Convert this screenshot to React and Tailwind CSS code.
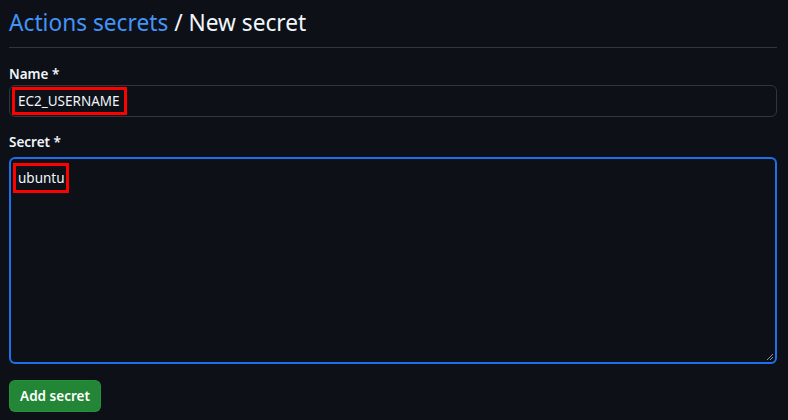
export default function App() {
  const font = { fontFamily: '"Noto Sans", "Open Sans", sans-serif' };
  return (
    <div
      className="w-[788px] h-[420px] overflow-hidden bg-[#0d1117] pl-[9px] pr-[11px] text-[#e6edf3]"
      style={font}
    >
      <h1 className="pt-[5px] pb-[6px] text-[22.7px] leading-[36px] font-normal border-b border-[#30363d] whitespace-nowrap">
        <span className="text-[#4493f8]">Actions secrets</span>
        <span className="text-[#f0f6fc]"> / New secret</span>
      </h1>

      <div className="mt-[16px] mb-[1px] text-[13.5px] leading-[20px] font-semibold text-[#f0f6fc]">Name *</div>
      <div className="h-[32px] rounded-[6px] border border-[#30363d] flex items-center pl-[2px]">
        <div className="h-[28px] w-[115px] border-[3px] border-[#ff0000] flex items-center pl-[3px] text-[13.5px] text-[#f0f6fc] whitespace-nowrap">
          EC2_USERNAME
        </div>
      </div>

      <div className="mt-[15px] mb-[5px] text-[13.5px] leading-[20px] font-semibold text-[#f0f6fc]">Secret *</div>
      <div className="relative h-[207px] rounded-[6px] border-2 border-[#1f6feb] pl-[2px] pt-[4px]">
        <div className="h-[30px] w-[56px] border-[3px] border-[#ff0000] flex items-center pl-[2px] text-[13.5px] text-[#f0f6fc] whitespace-nowrap">
          ubuntu
        </div>
        <svg className="absolute right-[1px] bottom-[1px]" width="9" height="9" viewBox="0 0 9 9">
          <line x1="8" y1="2" x2="2" y2="8" stroke="#8b949e" strokeWidth="1" />
          <line x1="8" y1="5" x2="5" y2="8" stroke="#8b949e" strokeWidth="1" />
        </svg>
      </div>

      <button className="mt-[16px] h-[32px] w-[92px] rounded-[6px] bg-[#238636] border border-[#2ea043]/40 text-[13.5px] font-semibold text-white">
        Add secret
      </button>
    </div>
  );
}
